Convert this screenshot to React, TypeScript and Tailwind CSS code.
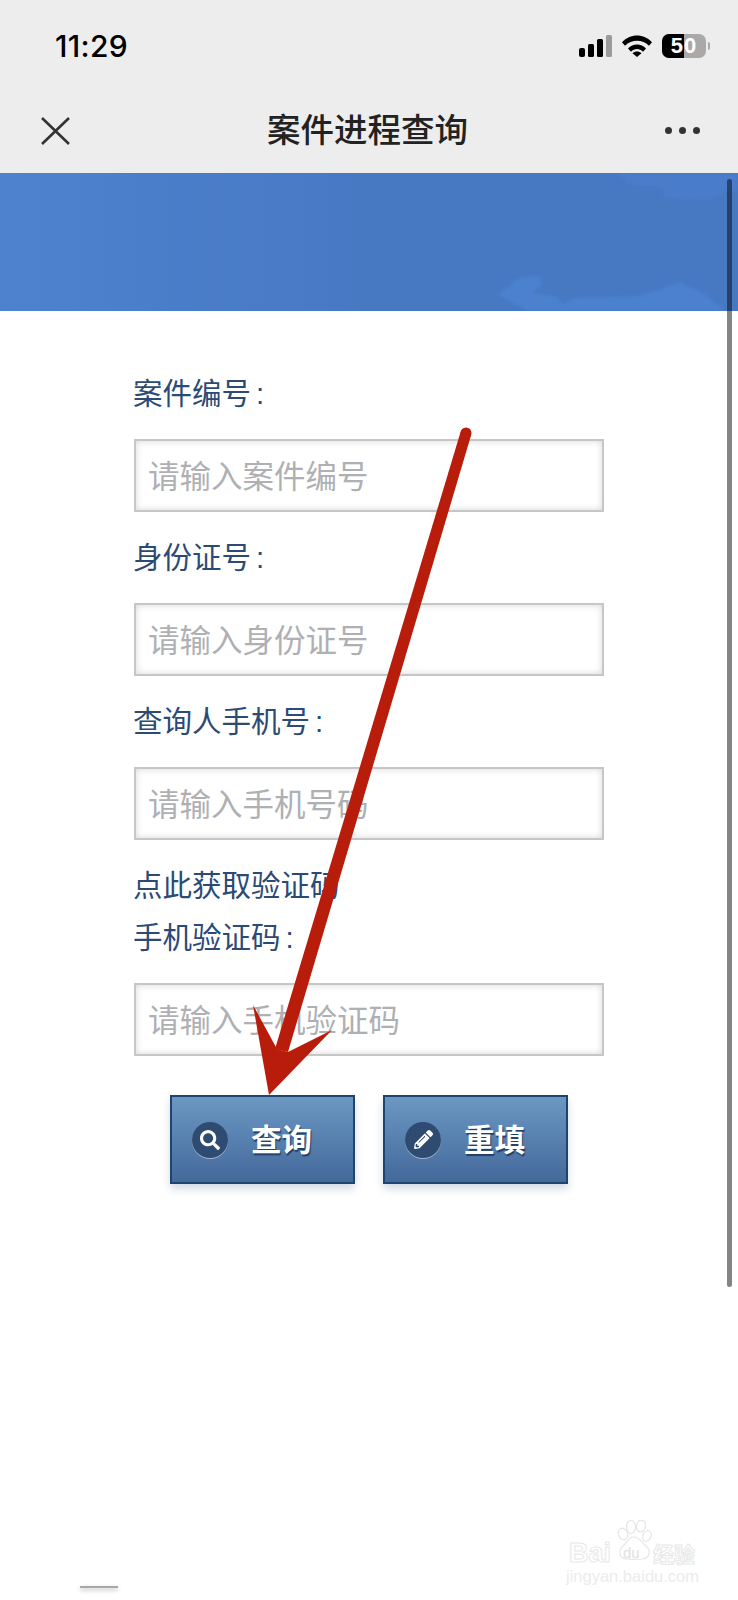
import React from "react";
import { FaSearch, FaPencilAlt } from "react-icons/fa";

const cjk = "font-['Noto_Sans_CJK_SC','Noto_Sans',sans-serif]";

function Label({ text, colon = true }: { text: string; colon?: boolean }) {
  return (
    <div className={`-ml-[1px] h-[52px] text-[29.5px] leading-[49px] text-[#2b4a76] ${cjk}`}>
      {text}
      {colon && <span className="ml-[5px] font-['Liberation_Sans',sans-serif]">:</span>}
    </div>
  );
}

function Field({ placeholder, last = false }: { placeholder: string; last?: boolean }) {
  return (
    <input
      readOnly
      placeholder={placeholder}
      className={`block h-[73px] w-[470px] border-2 border-[#c6c6c6] bg-white pb-[3px] pl-[12px] text-[31.5px] shadow-[inset_0_0_7px_rgba(0,0,0,0.16)] outline-none placeholder:text-[#aeb0b3] ${cjk} ${last ? "" : "mb-[19px]"}`}
    />
  );
}

function ActionButton({ label, icon }: { label: string; icon: React.ReactNode }) {
  return (
    <button className="flex h-[89px] w-[185px] items-center gap-[23px] border-2 border-[#1d4570] bg-gradient-to-b from-[#6b98c2] to-[#44699b] pl-[20px] shadow-[0_5px_8px_rgba(60,90,130,0.22)]">
      <span className="flex h-[36px] w-[36px] items-center justify-center rounded-full bg-[#2f4b72] text-white shadow-[0_1px_0_rgba(255,255,255,0.45)]">
        {icon}
      </span>
      <span className={`pb-[2px] text-[30.5px] font-bold text-white [text-shadow:1px_2px_1px_#213f66] ${cjk}`}>{label}</span>
    </button>
  );
}

function SignalIcon() {
  return (
    <svg width="33" height="22" viewBox="0 0 33 22">
      <rect x="0" y="13" width="6" height="9" rx="2" fill="#000" />
      <rect x="9" y="9" width="6" height="13" rx="1.5" fill="#000" />
      <rect x="18" y="4" width="6" height="18" rx="1.5" fill="#000" />
      <rect x="27" y="0" width="6" height="22" rx="1.5" fill="#9b9b9b" />
    </svg>
  );
}

function WifiIcon() {
  return (
    <svg width="30" height="22" viewBox="0 0 30 22">
      <path d="M0 7.2C8 -1.8 22 -1.8 30 7.2L27 10.8C20.5 4 9.5 4 3 10.8Z" fill="#000" />
      <path d="M6 13.6C10.8 8 19.2 8 24 13.6L21 16.8C17.6 13.2 12.4 13.2 9 16.8Z" fill="#000" />
      <path d="M10.5 18.2C13 15.8 17 15.8 19.5 18.2L15 22Z" fill="#000" />
    </svg>
  );
}

function Battery() {
  return (
    <div className="flex items-center gap-[2px]">
      <div className="relative flex h-[24px] w-[44px] overflow-hidden rounded-[7px] bg-[#a9a9a9]">
        <div className="h-full w-[22px] bg-black" />
        <div className="absolute inset-0 flex items-center justify-center font-['Liberation_Sans',sans-serif] text-[22px] font-bold leading-none tracking-[1px] text-white">
          50
        </div>
      </div>
      <div className="h-[8px] w-[2px] rounded-r-full bg-[#a9a9a9]" />
    </div>
  );
}

function Banner() {
  return (
    <div className="relative h-[138px] overflow-hidden bg-gradient-to-r from-[#4e82cf] via-[#4779c3] to-[#4779c3]">
      <svg className="absolute inset-0 blur-[1.5px]" width="738" height="138" viewBox="0 0 738 138">
        <polygon points="613,-4 630,12 663,14 663,25 710,27 727,17 745,17 745,-4" fill="#497cca" />
        <polygon points="498,122 520,104 540,103 542,112 532,120 558,124 562,132 573,125 640,123 663,115 680,109 703,120 730,142 537,142 517,132" fill="#4b81cf" />
      </svg>
    </div>
  );
}

function Watermark() {
  return (
    <div className="pointer-events-none absolute left-[566px] top-[1520px] h-[64px] w-[132px]">
      <svg className="absolute left-[50px] top-0" width="36" height="44" viewBox="0 0 36 44" fill="#fff" stroke="#e6e6e6" strokeWidth="1.2">
        <ellipse cx="7" cy="14" rx="4.5" ry="6" transform="rotate(-20 7 14)" />
        <ellipse cx="15" cy="7" rx="4.5" ry="6.5" />
        <ellipse cx="25" cy="6" rx="4.5" ry="6" transform="rotate(10 25 6)" />
        <ellipse cx="31" cy="16" rx="4" ry="5.5" transform="rotate(25 31 16)" />
        <path d="M18 17C12 17 11 23 7 26C2 30 3 38 10 39C14 39.5 22 39.5 27 39C34 38 35 30 30 26C26 23 24 17 18 17Z" />
      </svg>
      <span className="absolute left-[3px] top-[17px] font-['Liberation_Sans',sans-serif] text-[27px] font-bold leading-[32px] text-white [-webkit-text-stroke:1px_#e8e8e8]">
        Bai
      </span>
      <span className="absolute left-[57px] top-[23px] font-['Liberation_Sans',sans-serif] text-[15px] leading-[20px] text-[#e0e0e0]">
        du
      </span>
      <span className={`absolute left-[87px] top-[21px] text-[21px] font-bold leading-[24px] text-white [-webkit-text-stroke:1px_#e8e8e8] ${cjk}`}>
        经验
      </span>
      <span className="absolute left-0 top-[47px] whitespace-nowrap font-['Liberation_Sans',sans-serif] text-[16.5px] leading-[18px] text-[#ececec]">
        jingyan.baidu.com
      </span>
    </div>
  );
}

export default function App() {
  return (
    <div className="relative h-[1600px] w-[738px] overflow-hidden bg-white">
      <header className="h-[173px] bg-[#ededed]">
        <div className="flex h-[88px] items-center justify-between pl-[55px] pr-[28px] pt-[3px]">
          <span className="font-['Inter',sans-serif] text-[30px] font-medium leading-none tracking-[0.3px] text-black">11:29</span>
          <div className="flex items-center gap-[10px]">
            <SignalIcon />
            <WifiIcon />
            <Battery />
          </div>
        </div>
        <div className="flex h-[85px] items-center justify-between pl-[41px] pr-[38px]">
          <svg width="29" height="28" viewBox="0 0 29 28" fill="none" stroke="#333" strokeWidth="2.6">
            <path d="M1 1L28 27M28 1L1 27" />
          </svg>
          <h1 className={`pb-[5px] text-[33.5px] font-medium leading-none text-[#222] ${cjk}`}>案件进程查询</h1>
          <div className="flex gap-[7px]">
            <span className="h-[7px] w-[7px] rounded-full bg-[#333]" />
            <span className="h-[7px] w-[7px] rounded-full bg-[#333]" />
            <span className="h-[7px] w-[7px] rounded-full bg-[#333]" />
          </div>
        </div>
      </header>

      <Banner />

      <main className="ml-[134px] w-[470px] pt-[56px]">
        <Label text="案件编号" />
        <div className="h-[20px]" />
        <Field placeholder="请输入案件编号" />
        <Label text="身份证号" />
        <div className="h-[20px]" />
        <Field placeholder="请输入身份证号" />
        <Label text="查询人手机号" />
        <div className="h-[20px]" />
        <Field placeholder="请输入手机号码" />
        <Label text="点此获取验证码" colon={false} />
        <Label text="手机验证码" />
        <div className="h-[20px]" />
        <Field placeholder="请输入手机验证码" last />
        <div className="mt-[39px] flex justify-center gap-[28px]">
          <ActionButton label="查询" icon={<FaSearch size={20} />} />
          <ActionButton label="重填" icon={<FaPencilAlt size={19} />} />
        </div>
      </main>

      <div className="absolute left-[727px] top-[179px] h-[1108px] w-[5px] rounded-full bg-[rgba(10,10,10,0.5)]" />

      <svg className="pointer-events-none absolute left-0 top-0" width="738" height="1600" viewBox="0 0 738 1600">
        <circle cx="466" cy="433" r="5.5" fill="#b81c0b" />
        <polygon points="460.7,431.5 471.3,434.5 288,1052 275,1049" fill="#b81c0b" />
        <polygon points="253,1005 277,1049 288,1052 332,1030 269,1095" fill="#b81c0b" />
      </svg>

      <Watermark />

      <div className="absolute left-[80px] top-[1586px] h-[2px] w-[38px] bg-[#a8a8a8] shadow-[0_2px_4px_rgba(0,0,0,0.3)]" />
    </div>
  );
}
